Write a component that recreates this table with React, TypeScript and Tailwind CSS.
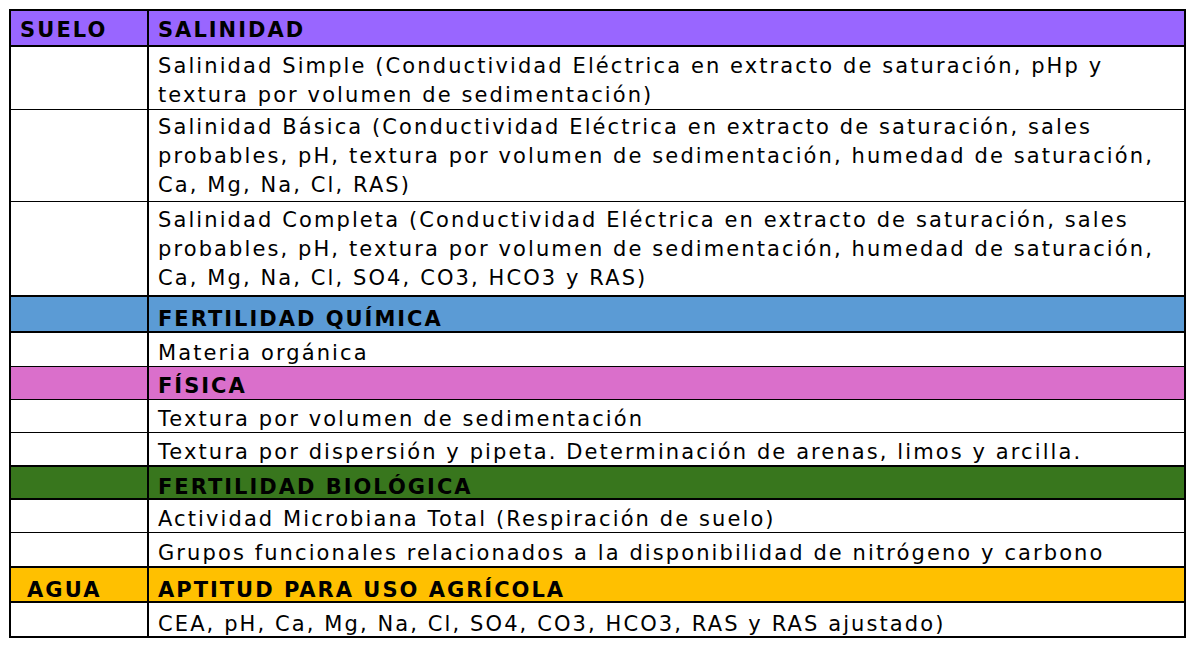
import React from "react";

type Row = {
  kind: "head" | "body";
  left?: string;
  lines: string[];
  rowCls: string;
  pad: string;
};

const rows: Row[] = [
  { kind: "head", left: "SUELO", lines: ["SALINIDAD"], rowCls: "h-[36px] bg-[#9966ff] border-b-2", pad: "pt-[4px]" },
  {
    kind: "body",
    lines: [
      "Salinidad Simple (Conductividad Eléctrica en extracto de saturación, pHp y",
      "textura por volumen de sedimentación)",
    ],
    rowCls: "h-[63px] bg-white border-b",
    pad: "pt-[6px]",
  },
  {
    kind: "body",
    lines: [
      "Salinidad Básica (Conductividad Eléctrica en extracto de saturación, sales",
      "probables, pH, textura por volumen de sedimentación, humedad de saturación,",
      "Ca, Mg, Na, Cl, RAS)",
    ],
    rowCls: "h-[92px] bg-white border-b",
    pad: "pt-[2px]",
  },
  {
    kind: "body",
    lines: [
      "Salinidad Completa (Conductividad Eléctrica en extracto de saturación, sales",
      "probables, pH, textura por volumen de sedimentación, humedad de saturación,",
      "Ca, Mg, Na, Cl, SO4, CO3, HCO3 y RAS)",
    ],
    rowCls: "h-[95px] bg-white border-b-2",
    pad: "pt-[2px]",
  },
  { kind: "head", lines: ["FERTILIDAD QUÍMICA"], rowCls: "h-[36px] bg-[#5b9bd5] border-b-2", pad: "pt-[10px]" },
  { kind: "body", lines: ["Materia orgánica"], rowCls: "h-[34px] bg-white border-b", pad: "pt-[8px]" },
  { kind: "head", lines: ["FÍSICA"], rowCls: "h-[33px] bg-[#da6fcb] border-b", pad: "pt-[6px]" },
  { kind: "body", lines: ["Textura por volumen de sedimentación"], rowCls: "h-[33px] bg-white border-b", pad: "pt-[6px]" },
  {
    kind: "body",
    lines: ["Textura por dispersión y pipeta. Determinación de arenas, limos y arcilla."],
    rowCls: "h-[34px] bg-white border-b-2",
    pad: "pt-[6px]",
  },
  { kind: "head", lines: ["FERTILIDAD BIOLÓGICA"], rowCls: "h-[33px] bg-[#38761d] border-b-2", pad: "pt-[10px]" },
  {
    kind: "body",
    lines: ["Actividad Microbiana Total (Respiración de suelo)"],
    rowCls: "h-[33px] bg-white border-b",
    pad: "pt-[6px]",
  },
  {
    kind: "body",
    lines: ["Grupos funcionales relacionados a la disponibilidad de nitrógeno y carbono"],
    rowCls: "h-[35px] bg-white border-b-2",
    pad: "pt-[8px]",
  },
  {
    kind: "head",
    left: "AGUA",
    lines: ["APTITUD PARA USO AGRÍCOLA"],
    rowCls: "h-[35px] bg-[#ffc000] border-b-2",
    pad: "pt-[12px]",
  },
  {
    kind: "body",
    lines: ["CEA, pH, Ca, Mg, Na, Cl, SO4, CO3, HCO3, RAS y RAS ajustado)"],
    rowCls: "h-[35px] bg-white border-b-2",
    pad: "pt-[10px]",
  },
];

export default function App() {
  return (
    <div
      className="w-[1192px] h-[648px] bg-white pt-[9px] pl-[9px] text-black"
      style={{ fontFamily: "'DejaVu Sans', sans-serif" }}
    >
      <div className="w-[1177px] border-t-2 border-l-2 border-r-2 border-black">
        {rows.map((r, i) => (
          <div key={i} className={`flex border-black ${r.rowCls}`}>
            <div className={`w-[138px] shrink-0 border-r-2 border-black flex items-center ${r.pad}`}>
              {r.left && (
                <span
                  className={`font-bold text-[21px] leading-[29px] tracking-[2.1px] ${r.left === "AGUA" ? "pl-[16px]" : "pl-[9px]"}`}
                >
                  {r.left}
                </span>
              )}
            </div>
            <div className={`flex-1 flex flex-col justify-center pl-[9px] ${r.pad}`}>
              {r.lines.map((l, j) =>
                r.kind === "head" ? (
                  <div key={j} className="font-bold text-[21px] leading-[29px] tracking-[2px] whitespace-nowrap">
                    {l}
                  </div>
                ) : (
                  <div key={j} className="text-[21px] leading-[29px] tracking-[2.1px] whitespace-nowrap">
                    {l}
                  </div>
                )
              )}
            </div>
          </div>
        ))}
      </div>
    </div>
  );
}
